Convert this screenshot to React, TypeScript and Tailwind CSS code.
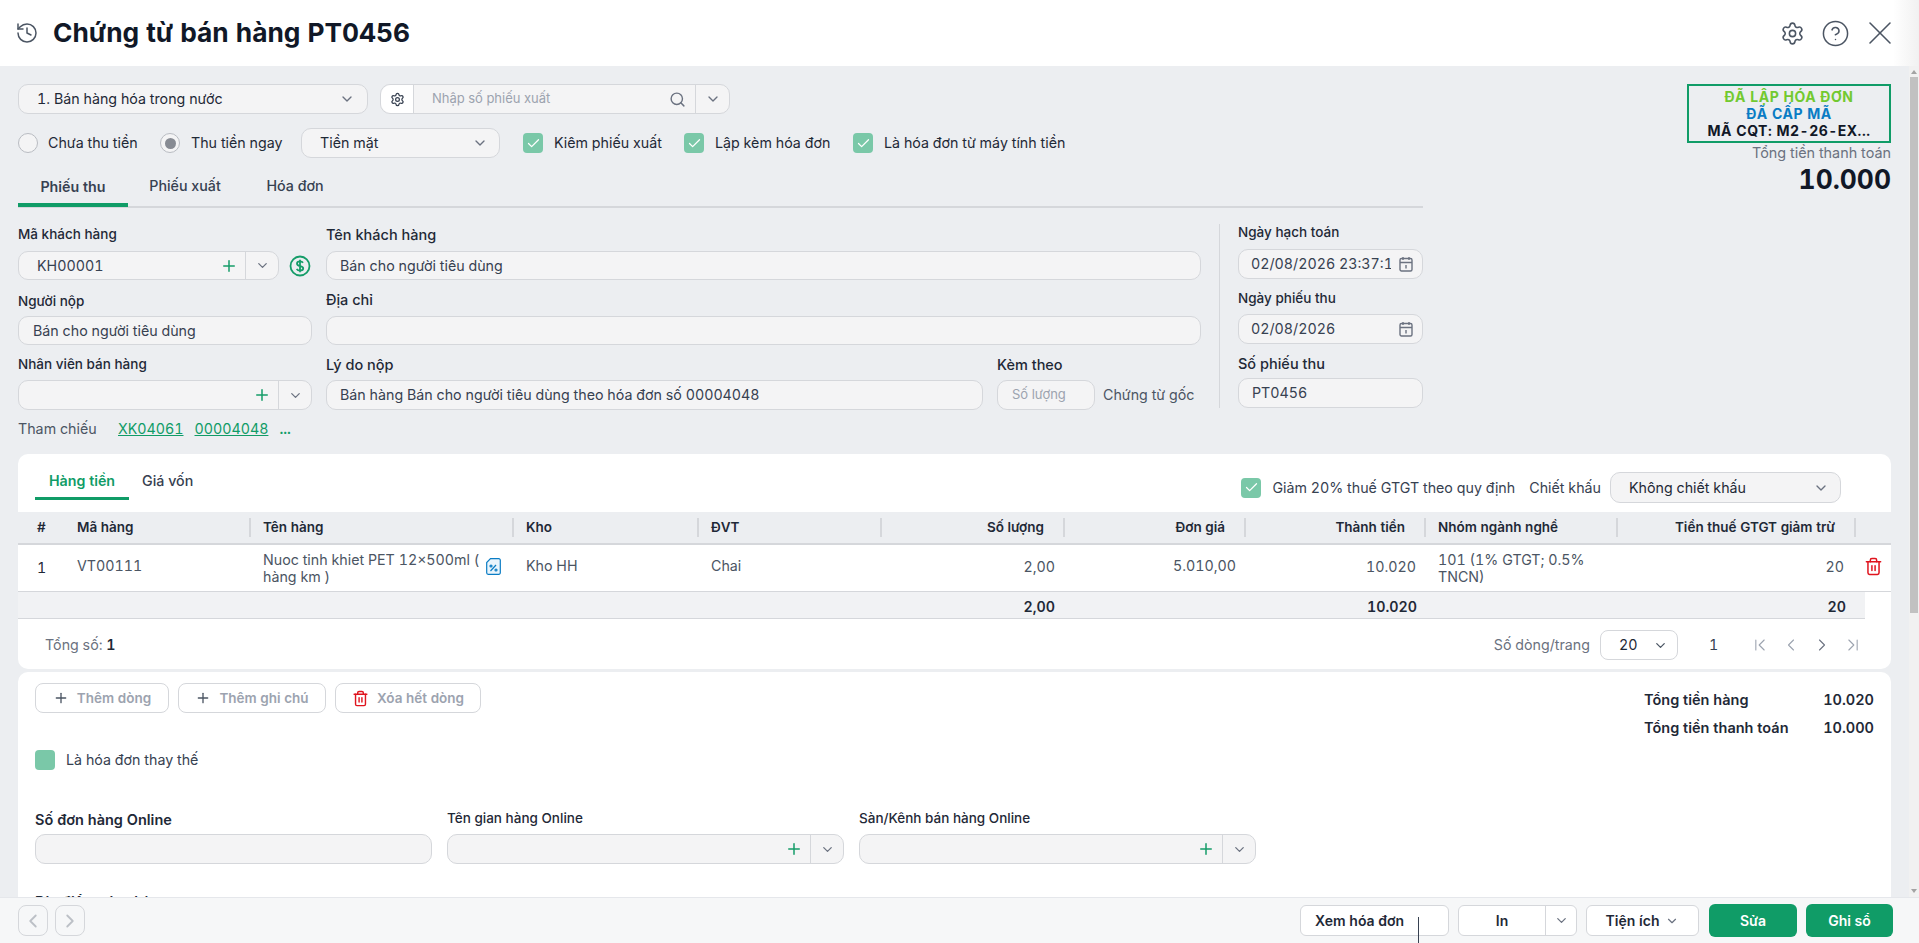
import {
  ChevronDown,
  ChevronLeft,
  ChevronRight,
  ChevronFirst,
  ChevronLast,
  CircleHelp,
  History,
  Plus,
  Search,
  Settings,
  Trash2,
  X,
  Check,
} from "lucide-react";
import type { ReactNode } from "react";

const inputBase =
  "flex items-center rounded-[10px] border border-[#d5d7db] bg-[#f4f4f5] text-[14.25px] text-[#374151]";

function GreenCheck({ checked = true }: { checked?: boolean }) {
  return (
    <span className="flex h-5 w-5 shrink-0 items-center justify-center rounded-[4px] bg-[#7ac8a8]">
      {checked && <Check size={15} strokeWidth={2} className="text-white" />}
    </span>
  );
}

function Radio({ on }: { on?: boolean }) {
  return (
    <span className="flex h-5 w-5 shrink-0 items-center justify-center rounded-full border border-[#b9bcc2] bg-[#f4f4f5]">
      {on && <span className="h-[11px] w-[11px] rounded-full bg-[#878b93]" />}
    </span>
  );
}

function CalendarIcon() {
  return (
    <svg width="14" height="16" viewBox="0 0 14 16" fill="none" stroke="#6b7280" strokeWidth="1.4" className="shrink-0">
      <rect x="1" y="2.5" width="12" height="12.5" rx="1.5" />
      <path d="M1 6.5h12M4 1v3M10 1v3" />
      <path d="M7 9v3.5" />
    </svg>
  );
}

function ComboInput({ className, value }: { className: string; value?: string }) {
  return (
    <div className={`${inputBase} ${className}`}>
      <span className="flex-1 pl-[18px]">{value}</span>
      <Plus size={18} strokeWidth={2} className="mr-[7px] text-[#159c68]" />
      <span className="flex h-full w-[33px] items-center justify-center border-l border-[#d5d7db]">
        <ChevronDown size={15} className="text-[#6b7280]" />
      </span>
    </div>
  );
}

function FormLabel({ children, className = "" }: { children: ReactNode; className?: string }) {
  return <div className={`flex h-5 items-center font-medium text-[#1f2937] ${className || "text-[13.5px]"}`}>{children}</div>;
}

function SolidButton({ children, className }: { children: ReactNode; className: string }) {
  return (
    <button className={`h-[33px] rounded-md bg-[#109c67] text-[14px] font-semibold text-white ${className}`}>
      {children}
    </button>
  );
}

function GhostButton({ children, className }: { children: ReactNode; className: string }) {
  return (
    <button className={`flex h-[30px] items-center justify-center gap-2 rounded-lg border border-[#d5d7db] bg-white text-[13.5px] font-semibold text-[#9ca3af] ${className}`}>
      {children}
    </button>
  );
}

const columns = "grid grid-cols-[47px_186px_263px_185px_183px_183px_181px_180px_192px_238px_35px]";

function HeadCell({ children, right, sep = true, pad }: { children?: ReactNode; right?: boolean; sep?: boolean; pad?: string }) {
  return (
    <div className={`relative flex items-center text-[13.5px] font-semibold text-[#1f2937] ${right ? "justify-end pr-[21px]" : pad ?? "pl-3"}`}>
      {children}
      {sep && <span className="absolute top-[6px] right-0 h-[19px] w-[2px] bg-[#d5d7db]" />}
    </div>
  );
}

export default function App() {
  return (
    <div className="flex h-[943px] w-[1919px] flex-col overflow-hidden bg-white font-['Inter',sans-serif] text-[14.25px] text-[#1f2937] tabular-nums">
      {/* Header */}
      <header className="relative flex h-[66px] shrink-0 items-center bg-white pl-[15px] pr-[19px]">
        <History size={24} strokeWidth={1.5} className="text-[#4b5563]" />
        <h1 className="ml-[14px] flex-1 text-[26.3px] font-bold text-[#111827]">Chứng từ bán hàng PT0456</h1>
        <Settings size={25} strokeWidth={1.5} className="text-[#4b5563]" />
        <CircleHelp size={29} strokeWidth={1.25} className="ml-[16px] text-[#4b5563]" />
        <X size={40} strokeWidth={0.95} className="ml-[10px] text-[#4b5563]" />
        <span className="absolute top-0 right-0 h-full w-[26px] bg-gradient-to-r from-white to-[#f1f1f1]" />
      </header>

      <div className="flex min-h-0 flex-1">
        <main className="min-w-0 flex-1 overflow-hidden bg-[#eceef1] px-[18px] pt-[18px]">
          <div className="flex justify-between">
            <div className="w-[1405px]">
              {/* Voucher type */}
              <div className="flex h-[30px] gap-3">
                <div className={`${inputBase} w-[350px] justify-between pl-[18px] pr-[12px]`}>
                  <span className="text-[#1f2937]">1. Bán hàng hóa trong nước</span>
                  <ChevronDown size={16} className="text-[#6b7280]" />
                </div>
                <div className={`${inputBase} w-[350px]`}>
                  <span className="flex h-full w-[33px] items-center justify-center rounded-l-[10px] border-r border-[#d5d7db] bg-white">
                    <Settings size={15} className="text-[#374151]" />
                  </span>
                  <span className="flex-1 pl-[18px] text-[13px] text-[#9ca3af]">Nhập số phiếu xuất</span>
                  <Search size={17} className="mr-[9px] text-[#6b7280]" />
                  <span className="flex h-full w-[34px] items-center justify-center border-l border-[#d5d7db]">
                    <ChevronDown size={16} className="text-[#6b7280]" />
                  </span>
                </div>
              </div>

              {/* Payment options */}
              <div className="mt-[14px] flex h-[30px] items-center">
                <Radio />
                <span className="ml-[10px] w-[112px]">Chưa thu tiền</span>
                <Radio on />
                <span className="ml-[11px] w-[110px]">Thu tiền ngay</span>
                <div className={`${inputBase} h-full w-[199px] justify-between pl-[18px] pr-[11px]`}>
                  <span className="text-[#1f2937]">Tiền mặt</span>
                  <ChevronDown size={16} className="text-[#6b7280]" />
                </div>
                <span className="ml-[23px]"><GreenCheck /></span>
                <span className="ml-[11px] w-[130px]">Kiêm phiếu xuất</span>
                <GreenCheck />
                <span className="ml-[11px] w-[138px]">Lập kèm hóa đơn</span>
                <GreenCheck />
                <span className="ml-[11px]">Là hóa đơn từ máy tính tiền</span>
              </div>

              {/* Tabs */}
              <div className="flex h-[50px] items-end border-b-2 border-[#d5d7db]">
                <div className="-mb-[1px] flex h-[36px] w-[110px] items-start justify-center border-b-4 border-[#109c67] pt-[5px] font-semibold text-[#374151]">Phiếu thu</div>
                <div className="flex h-[36px] w-[114px] items-start justify-center pt-[5px] font-medium text-[#374151]">Phiếu xuất</div>
                <div className="flex h-[36px] w-[106px] items-start justify-center pt-[5px] font-medium text-[#374151]">Hóa đơn</div>
              </div>

              {/* Customer form */}
              <div className="flex">
                <div className="w-[294px] pt-[16px]">
                  <FormLabel>Mã khách hàng</FormLabel>
                  <div className="mt-[7px] flex h-[29px] items-center">
                    <ComboInput className="h-full w-[261px]" value="KH00001" />
                    <svg width="22" height="22" viewBox="0 0 22 22" fill="none" stroke="#159c68" strokeWidth="1.8" className="ml-[10px]">
                      <circle cx="11" cy="11" r="9.5" />
                      <path d="M14 7.8c-.6-1-1.6-1.4-3-1.4-1.7 0-3 .9-3 2.3 0 3.2 6.2 1.500 6.200 4.600 0 1.400-1.400 2.300-3.200 2.300-1.500 0-2.700-.6-3.300-1.700M11 4.800v12.400" />
                    </svg>
                  </div>
                  <FormLabel className="mt-[11px] text-[13.5px]">Người nộp</FormLabel>
                  <div className={`${inputBase} mt-[5px] h-[29px] pl-[14px]`}>Bán cho người tiêu dùng</div>
                  <FormLabel className="mt-[9px] text-[13.5px]">Nhân viên bán hàng</FormLabel>
                  <ComboInput className="mt-[6px] h-[30px]" />
                  <div className="mt-[9px] flex h-5 items-center whitespace-nowrap text-[#4b5563]">
                    <span className="w-[78px]">Tham chiếu</span>
                    <a className="ml-[22px] text-[#109c67] underline">XK04061</a>
                    <a className="ml-[11px] text-[#109c67] underline">00004048</a>
                    <span className="ml-[11px] font-semibold text-[#109c67]">...</span>
                  </div>
                </div>

                <div className="ml-[14px] w-[875px] pt-[17px]">
                  <FormLabel className="text-[14.5px]">Tên khách hàng</FormLabel>
                  <div className={`${inputBase} mt-[6px] h-[29px] pl-[13px]`}>Bán cho người tiêu dùng</div>
                  <FormLabel className="mt-[10px] text-[14.5px]">Địa chỉ</FormLabel>
                  <div className={`${inputBase} mt-[6px] h-[29px]`} />
                  <div className="mt-[10px] flex">
                    <div className="w-[657px]">
                      <FormLabel className="text-[14.5px]">Lý do nộp</FormLabel>
                      <div className={`${inputBase} mt-[5px] h-[30px] pl-[13px]`}>Bán hàng Bán cho người tiêu dùng theo hóa đơn số 00004048</div>
                    </div>
                    <div className="ml-[14px]">
                      <FormLabel className="text-[14.5px]">Kèm theo</FormLabel>
                      <div className="mt-[5px] flex items-center">
                        <div className={`${inputBase} h-[30px] w-[98px] pl-[14px]`}>
                          <span className="text-[13px] text-[#9ca3af]">Số lượng</span>
                        </div>
                        <span className="ml-[8px] whitespace-nowrap text-[#4b5563]">Chứng từ gốc</span>
                      </div>
                    </div>
                  </div>
                </div>

                <div className="ml-[18px] mt-[16px] h-[184px] w-px bg-[#d5d7db]" />

                <div className="ml-[18px] w-[185px] pt-[14px]">
                  <FormLabel>Ngày hạch toán</FormLabel>
                  <div className={`${inputBase} mt-[7px] h-[30px] justify-between pl-[12px] pr-[9px]`}>
                    <span className="w-[140px] overflow-hidden whitespace-nowrap">02/08/2026 23:37:15</span>
                    <CalendarIcon />
                  </div>
                  <FormLabel className="mt-[9px] text-[13.5px]">Ngày phiếu thu</FormLabel>
                  <div className={`${inputBase} mt-[6px] h-[30px] justify-between pl-[12px] pr-[9px]`}>
                    02/08/2026
                    <CalendarIcon />
                  </div>
                  <FormLabel className="mt-[10px] text-[14.5px]">Số phiếu thu</FormLabel>
                  <div className={`${inputBase} mt-[4px] h-[30px] pl-[13px]`}>PT0456</div>
                </div>
              </div>
            </div>

            {/* Status */}
            <div className="flex flex-col items-end">
              <div className="flex h-[59px] w-[204px] flex-col items-center justify-center border-2 border-[#109c67] text-center text-[14px] leading-[17px] font-bold tracking-[0.5px]">
                <span className="text-[#72c930]">ĐÃ LẬP HÓA ĐƠN</span>
                <span className="text-[#0a7cc4]">ĐÃ CẤP MÃ</span>
                <span className="text-[#111827]">MÃ CQT: M2-26-EX...</span>
              </div>
              <span className="-mt-[1px] text-[14.4px] text-[#6b7280]">Tổng tiền thanh toán</span>
              <span className="-mt-[1px] text-[26.4px] leading-[32px] font-bold text-[#111827]">10.000</span>
            </div>
          </div>

          {/* Lines table */}
          <section className="mt-[15px] h-[215px] rounded-[10px] bg-white">
            <div className="flex h-[58px] items-start justify-between pr-[50px]">
              <div className="ml-[17px] flex h-[46px]">
                <div className="flex w-[94px] items-center justify-center border-b-[3px] border-[#109c67] pt-[10px] font-semibold text-[#109c67]">Hàng tiền</div>
                <div className="ml-[13px] flex h-[43px] items-center pt-[10px] font-medium text-[#374151]">Giá vốn</div>
              </div>
              <div className="mt-[18px] flex h-[31px] items-center">
                <GreenCheck />
                <span className="ml-[11px] text-[#374151]">Giảm 20% thuế GTGT theo quy định</span>
                <span className="ml-[14px] text-[#374151]">Chiết khấu</span>
                <div className={`${inputBase} ml-[9px] h-full w-[231px] justify-between pl-[18px] pr-[11px]`}>
                  <span className="text-[#1f2937]">Không chiết khấu</span>
                  <ChevronDown size={16} className="text-[#6b7280]" />
                </div>
              </div>
            </div>

            <div className={`${columns} h-[33px] border-b-2 border-[#d5d7db] bg-[#eceef1]`}>
              <HeadCell sep={false} pad="pl-[19px]">#</HeadCell>
              <HeadCell>Mã hàng</HeadCell>
              <HeadCell>Tên hàng</HeadCell>
              <HeadCell>Kho</HeadCell>
              <HeadCell>ĐVT</HeadCell>
              <HeadCell right>Số lượng</HeadCell>
              <HeadCell right>Đơn giá</HeadCell>
              <HeadCell right>Thành tiền</HeadCell>
              <HeadCell>Nhóm ngành nghề</HeadCell>
              <HeadCell right>Tiền thuế GTGT giảm trừ</HeadCell>
              <HeadCell sep={false} />
            </div>

            <div className={`${columns} h-[47px] items-center border-b border-[#d5d7db] text-[#4b5563]`}>
              <div className="pl-[19px] text-[#1f2937]">1</div>
              <div className="pb-[4px] pl-3">VT00111</div>
              <div className="relative pl-3 pr-[30px] leading-[17px]">
                Nuoc tinh khiet PET 12×500ml ( hàng km )
                <svg width="15" height="17" viewBox="0 0 15 17" fill="#eaf5fc" stroke="#0a7cc4" strokeWidth="1.2" className="absolute top-[7px] right-[13px]">
                  <path d="M4.500 .7h8.300a1.500 1.500 0 0 1 1.500 1.500v12.600a1.500 1.500 0 0 1-1.500 1.500H2.200a1.500 1.500 0 0 1-1.500-1.500V4.500z" />
                  <path d="M4.500 13l5.500-6" fill="none" />
                  <circle cx="5" cy="8" r="1" fill="none" />
                  <circle cx="10" cy="12" r="1" fill="none" />
                </svg>
              </div>
              <div className="pb-[4px] pl-3">Kho HH</div>
              <div className="pb-[4px] pl-3">Chai</div>
              <div className="pb-[3px] pr-[10px] text-right">2,00</div>
              <div className="pb-[4px] pr-[10px] text-right">5.010,00</div>
              <div className="pb-[3px] pr-[10px] text-right">10.020</div>
              <div className="pl-3 pr-[30px] leading-[17px]">101 (1% GTGT; 0.5% TNCN)</div>
              <div className="pb-[3px] pr-[12px] text-right">20</div>
              <div className="flex justify-center pb-[3px]"><Trash2 size={19} strokeWidth={1.9} className="text-[#e0141e]" /></div>
            </div>

            <div className="grid h-[27px] w-[1847px] grid-cols-[47px_186px_263px_185px_183px_183px_181px_180px_192px_238px_9px] items-center border-b border-[#d5d7db] bg-[#f1f2f4] pt-[4px] font-semibold text-[#1f2937]">
              <div className="col-start-6 pr-[10px] text-right">2,00</div>
              <div className="col-start-8 pr-[9px] text-right">10.020</div>
              <div className="col-start-10 pr-[10px] text-right">20</div>
            </div>

            <div className="flex h-[50px] items-center pl-[27px] pr-[28px] pt-[2px]">
              <span className="flex-1 text-[#6b7280]">Tổng số: <b className="font-semibold text-[#1f2937]">1</b></span>
              <span className="text-[#6b7280]">Số dòng/trang</span>
              <div className="ml-[10px] flex h-[30px] w-[78px] items-center justify-between rounded-lg border border-[#d5d7db] pl-[18px] pr-[9px] text-[#1f2937]">
                20
                <ChevronDown size={15} className="text-[#4b5563]" />
              </div>
              <span className="ml-[31px] w-[41px] text-[#374151]">1</span>
              <ChevronFirst size={20} strokeWidth={1.3} className="text-[#9ca3af]" />
              <ChevronLeft size={20} strokeWidth={1.3} className="ml-[11px] text-[#9ca3af]" />
              <ChevronRight size={20} strokeWidth={1.3} className="ml-[11px] text-[#6b7280]" />
              <ChevronLast size={20} strokeWidth={1.3} className="ml-[11px] text-[#9ca3af]" />
            </div>
          </section>

          {/* Footer of the voucher */}
          <section className="mt-[3px] h-[300px] rounded-t-[10px] bg-white px-[17px] pt-[11px]">
            <div className="flex justify-between">
              <div className="flex gap-[9px]">
                <GhostButton className="w-[134px]"><Plus size={16} className="text-[#4b5563]" />Thêm dòng</GhostButton>
                <GhostButton className="w-[148px]"><Plus size={16} className="text-[#4b5563]" />Thêm ghi chú</GhostButton>
                <GhostButton className="w-[146px]"><Trash2 size={17} strokeWidth={2} className="text-[#e0141e]" />Xóa hết dòng</GhostButton>
              </div>
              <div className="mt-[6px] text-[14.5px] font-semibold text-[#1f2937]">
                <div className="flex h-5 w-[230px] justify-between"><span>Tổng tiền hàng</span><span>10.020</span></div>
                <div className="mt-2 flex h-5 w-[230px] justify-between"><span>Tổng tiền thanh toán</span><span>10.000</span></div>
              </div>
            </div>
            <div className="mt-[12px] flex items-center text-[#374151]">
              <GreenCheck checked={false} />
              <span className="ml-[11px]">Là hóa đơn thay thế</span>
            </div>
            <div className="mt-[39px] flex gap-[15px]">
              <div className="w-[397px]">
                <div className="flex h-5 items-center text-[14.5px] font-semibold text-[#1f2937]">Số đơn hàng Online</div>
                <div className={`${inputBase} mt-[5px] h-[30px]`} />
              </div>
              <div className="w-[397px]">
                <FormLabel className="pb-[2px] text-[13.5px]">Tên gian hàng Online</FormLabel>
                <ComboInput className="mt-[5px] h-[30px]" />
              </div>
              <div className="w-[397px]">
                <FormLabel className="pb-[2px] text-[13.5px]">Sàn/Kênh bán hàng Online</FormLabel>
                <ComboInput className="mt-[5px] h-[30px]" />
              </div>
            </div>
            <div className="mt-[27px] text-[14.5px] font-semibold">Địa điểm giao hàng</div>
          </section>
        </main>

        {/* Scroll bar */}
        <div className="flex w-[10px] shrink-0 flex-col items-center bg-[#f1f1f1]">
          <span className="mt-[4px] h-0 w-0 border-x-[3px] border-b-[4px] border-x-transparent border-b-[#a3a3a3]" />
          <span className="mt-[3px] h-[536px] w-[8px] bg-[#c1c1c1]" />
          <span className="mt-auto mb-[4px] h-0 w-0 border-x-[3px] border-t-[4px] border-x-transparent border-t-[#a3a3a3]" />
        </div>
      </div>

      {/* Bottom bar */}
      <footer className="relative flex h-[46px] shrink-0 items-center border-t border-[#e5e7eb] bg-[#f6f7f8] pl-[18px] pr-[26px]">
        <button className="flex h-[31px] w-[30px] items-center justify-center rounded-lg border border-[#d5d7db]"><ChevronLeft size={22} strokeWidth={2} className="text-[#bcc0c6]" /></button>
        <button className="ml-[7px] flex h-[31px] w-[30px] items-center justify-center rounded-lg border border-[#d5d7db]"><ChevronRight size={22} strokeWidth={2} className="text-[#bcc0c6]" /></button>
        <div className="flex-1" />
        <button className="h-[31px] w-[149px] rounded-md border border-[#d5d7db] bg-white pl-[14px] text-left text-[14px] font-semibold text-[#1f2937]">Xem hóa đơn</button>
        <div className="ml-[9px] flex h-[31px] w-[119px] items-center rounded-md border border-[#d5d7db] bg-white text-[14px] font-semibold">
          <span className="flex-1 text-center">In</span>
          <span className="flex h-full w-[31px] items-center justify-center border-l border-[#d5d7db]"><ChevronDown size={15} className="text-[#6b7280]" /></span>
        </div>
        <button className="ml-[9px] flex h-[31px] w-[113px] items-center justify-center gap-[6px] rounded-md border border-[#d5d7db] bg-white text-[14px] font-semibold">
          Tiện ích<ChevronDown size={14} className="text-[#6b7280]" />
        </button>
        <SolidButton className="ml-[10px] w-[88px]">Sửa</SolidButton>
        <SolidButton className="ml-[9px] w-[87px]">Ghi sổ</SolidButton>
        <span className="absolute top-[19px] left-[1418px] h-[27px] w-px bg-[#374151]" />
      </footer>
    </div>
  );
}
